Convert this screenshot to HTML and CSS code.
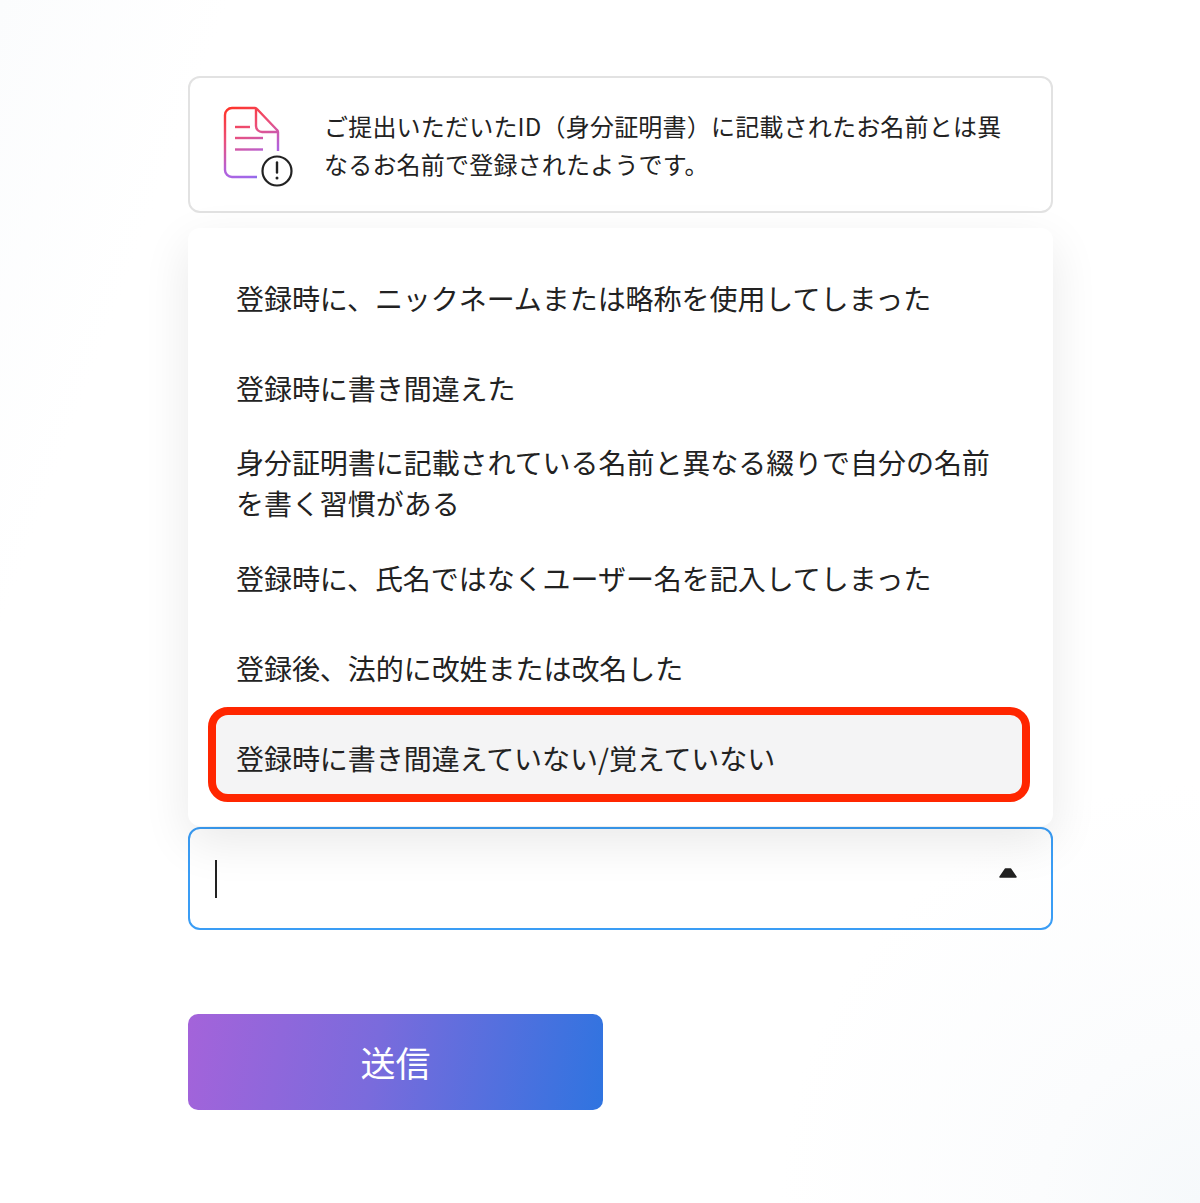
FILE: index.html
```html
<!DOCTYPE html>
<html lang="ja">
<head>
  <meta charset="UTF-8">
  <meta name="viewport" content="width=device-width, initial-scale=1.0">
  <title>ID確認</title>
  <link rel="stylesheet" href="styles.css">
</head>
<body>
  <main class="form">
    <div class="notice">
      <svg class="notice-icon" width="72" height="84" viewBox="0 0 72 84" fill="none">
        <defs>
          <linearGradient id="docGrad" gradientUnits="userSpaceOnUse" x1="8" y1="0" x2="42" y2="74">
            <stop offset="0" stop-color="#ff3328"/>
            <stop offset="0.35" stop-color="#ec4f78"/>
            <stop offset="0.7" stop-color="#b262dc"/>
            <stop offset="0.9" stop-color="#a068ea"/>
            <stop offset="1" stop-color="#4f80e8"/>
          </linearGradient>
        </defs>
        <g stroke="url(#docGrad)" stroke-width="2.400">
          <path d="M34 71H9a7 7 0 0 1-7-7V9a7 7 0 0 1 7-7h23a3 3 0 0 1 2 1l20 21a3 3 0 0 1 1 2v19"/>
          <path d="M33 3v17a6 6 0 0 0 6 6h16"/>
          <path d="M12 21h15"/>
          <path d="M12 32h28"/>
          <path d="M12 43.500h28"/>
        </g>
        <circle cx="54" cy="65" r="14.500" fill="#fff" stroke="#222" stroke-width="2.200"/>
        <path d="M54 56.500v10" stroke="#222" stroke-width="2.400" stroke-linecap="round"/>
        <circle cx="54" cy="72" r="1.500" fill="#222"/>
      </svg>
      <p class="notice-text">ご提出いただいたID（身分証明書）に記載されたお名前とは異なるお名前で登録されたようです。</p>
    </div>

    <div class="menu">
      <div class="option">登録時に、ニックネームまたは略称を使用してしまった</div>
      <div class="option">登録時に書き間違えた</div>
      <div class="option">身分証明書に記載されている名前と異なる綴りで自分の名前を書く習慣がある</div>
      <div class="option">登録時に、氏名ではなくユーザー名を記入してしまった</div>
      <div class="option">登録後、法的に改姓または改名した</div>
      <div class="option selected">登録時に書き間違えていない/覚えていない</div>
    </div>

    <div class="select">
      <span class="caret"></span>
      <svg class="arrow" width="18" height="11" viewBox="0 0 18 11">
        <path d="M1 10L6.500 2h5L17 10z" fill="#222" stroke="#222" stroke-width="1.500" stroke-linejoin="round"/>
      </svg>
    </div>

    <button class="submit">送信</button>
  </main>
</body>
</html>
```

FILE: styles.css
```css
body {
  margin: 0;
  min-height: 1203px;
  box-sizing: border-box;
  font-family: "Noto Sans CJK JP", "Noto Sans", sans-serif;
  color: #222;
  background:
    radial-gradient(circle at 1200px 1203px, #f6f9fb 0, #fbfcfd 160px, rgba(255, 255, 255, 0) 420px),
    linear-gradient(110deg, #fbfcfd 0, #ffffff 14%);
  overflow: hidden;
}
.form {
  width: 865px;
  margin-left: 188px;
  padding-top: 76px;
}
.notice {
  display: flex;
  align-items: center;
  height: 137px;
  box-sizing: border-box;
  border: 2px solid #e2e2e2;
  border-radius: 12px;
  background: #fff;
  padding-left: 33px;
}
.notice-icon {
  flex: none;
  margin-right: 29px;
  margin-top: 6px;
}
.notice-text {
  margin: 0;
  width: 690px;
  font-size: 24px;
  line-height: 38px;
  letter-spacing: 0.2px;
}
.menu {
  position: relative;
  margin-top: 15px;
  height: 598px;
  box-sizing: border-box;
  padding: 25px 31px 0 28px;
  background: #fff;
  border-radius: 12px;
  box-shadow: 0 16px 48px rgba(0, 0, 0, 0.09);
}
.option {
  display: flex;
  align-items: center;
  min-height: 90px;
  padding: 9px 20px;
  box-sizing: border-box;
  font-size: 28px;
  line-height: 41px;
  letter-spacing: -0.05px;
}
.selected {
  min-height: 79px;
  margin-top: 2px;
  padding-top: 16px;
  padding-bottom: 9px;
  background: #f4f4f5;
  border-radius: 12px;
  outline: 8px solid #ff2600;
}
.select {
  display: flex;
  align-items: center;
  justify-content: space-between;
  height: 103px;
  margin-top: 1px;
  box-sizing: border-box;
  border: 2px solid #3a9df5;
  border-radius: 12px;
  padding: 0 34px 0 25px;
}
.caret {
  width: 2px;
  height: 38px;
  background: #222;
}
.arrow {
  margin-top: -12px;
}
.submit {
  display: block;
  width: 415px;
  height: 96px;
  margin-top: 84px;
  border: none;
  border-radius: 10px;
  color: #fff;
  font-family: inherit;
  font-size: 35px;
  padding-bottom: 2px;
  background: linear-gradient(100deg, #a463da 0, #7a6bdc 45%, #2f74e0 100%);
}
```
